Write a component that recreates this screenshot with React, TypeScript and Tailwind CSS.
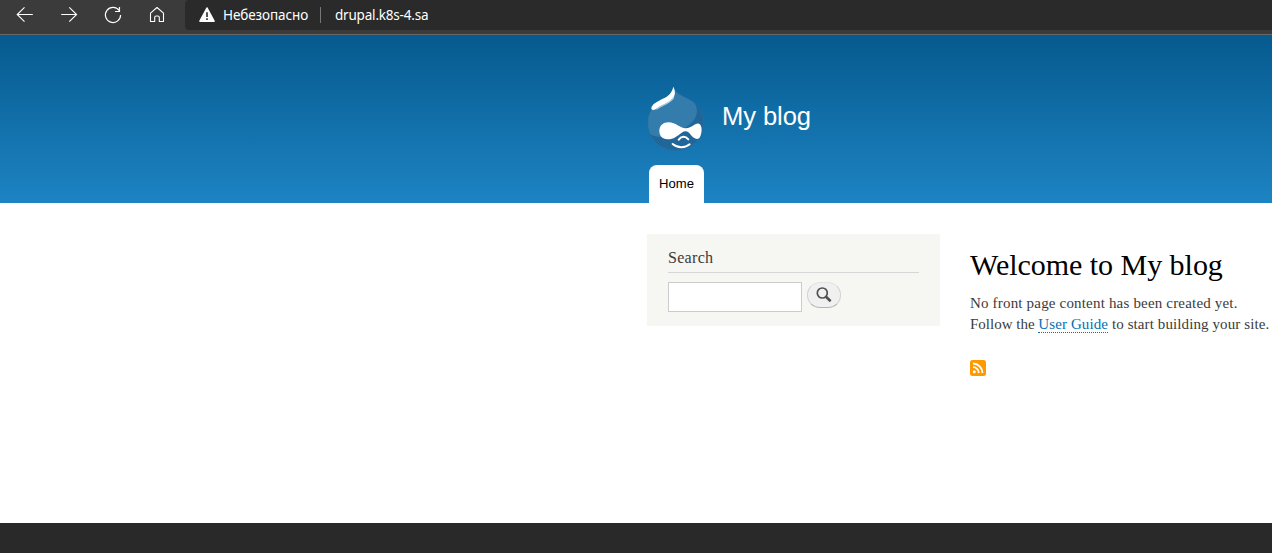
import React from "react";

function BrowserBar() {
  return (
    <div className="flex h-[35px] border-b border-[#686868] bg-[#3b3b3b] font-['Noto_Sans',sans-serif] text-white">
      <div className="flex h-[30px] w-[185px] shrink-0 items-center gap-6 pl-[15px]">
        <svg width="20" height="20" viewBox="0 0 20 20" fill="none" stroke="currentColor" strokeWidth="1.1" className="shrink-0">
          <path d="M17.8 9.5H2.2M9.5 2.4L2.2 9.5L9.5 16.6" />
        </svg>
        <svg width="20" height="20" viewBox="0 0 20 20" fill="none" stroke="currentColor" strokeWidth="1.1" className="shrink-0">
          <path d="M2.2 9.5H17.6M10.3 2.4L17.6 9.5L10.3 16.6" />
        </svg>
        <svg width="20" height="20" viewBox="0 0 20 20" fill="none" stroke="currentColor" strokeWidth="1.15" className="shrink-0">
          <path d="M16.3 5.7A7.6 7.6 0 1 0 17.6 10M16.5 2V6.5H12" />
        </svg>
        <svg width="20" height="20" viewBox="0 0 20 20" fill="none" stroke="currentColor" strokeWidth="1.1" strokeLinejoin="round" className="shrink-0">
          <path d="M3.5 8.2L10 2.5L16.5 8.2V16.5H12.3V12.5A1.5 1.5 0 0 0 10.8 11H9.2A1.5 1.5 0 0 0 7.7 12.5V16.5H3.5Z" />
        </svg>
      </div>
      <div className="flex h-[30px] grow items-center rounded-bl-[4px] rounded-tl-[4px] bg-[#2a2a2a] pl-[14px] text-[13.5px]">
        <svg width="16" height="16" viewBox="0 0 16 16" className="shrink-0">
          <path d="M8 1L15 14.2H1Z" fill="white" stroke="white" strokeWidth="1.6" strokeLinejoin="round" />
          <path d="M8 5.2V10M8 11.2V13" stroke="#2a2a2a" strokeWidth="1.6" />
        </svg>
        <span className="ml-2 w-[97px] whitespace-nowrap tracking-[-0.1px]">Небезопасно</span>
        <span className="h-4 w-px bg-[#777]" />
        <span className="ml-[14px] whitespace-nowrap tracking-[-0.2px]">drupal.k8s-4.sa</span>
      </div>
    </div>
  );
}

function Logo() {
  return (
    <svg width="60" height="67" viewBox="18 15 180 201" className="shrink-0">
      <path d="M100 20C103 34 116 42 140 54C171 69 191 94 191 127C191 176 156 211 107 211C58 211 23 177 23 127C23 101 36 81 57 67C78 53 95 47 100 20Z" fill="#347cac" stroke="#24699b" strokeWidth="2" />
      <path d="M164 70C182 86 190 105 190 127C190 175 156 210 107 210C72 210 44 192 31 163C56 178 92 171 123 152C160 130 183 104 164 70Z" fill="#216698" />
      <path d="M100 20C106 32 107 45 99 54C88 70 68 73 56 82C45 91 34 93 34 84C36 74 48 67 61 60C82 50 95 43 100 20Z" fill="#fff" />
      <path d="M102 52C88 72 68 74 49 88" fill="none" stroke="#a9cae0" strokeWidth="4" />
      <path d="M85 127C108 127 119 144 137 145C153 146 165 128 177 131C187 134 187 158 180 171C173 184 158 173 151 163C144 153 136 151 125 158C111 168 102 178 83 178C66 178 57 166 58 151C59 136 70 127 85 127Z" fill="#fff" />
      <path d="M116 179C123 168 136 167 145 178" fill="none" stroke="#fff" strokeWidth="6" strokeLinecap="round" />
      <path d="M98 192C112 204 135 205 149 193" fill="none" stroke="#fff" strokeWidth="6" strokeLinecap="round" />
    </svg>
  );
}

export default function App() {
  return (
    <div className="flex h-[553px] w-[1272px] flex-col overflow-hidden bg-white">
      <BrowserBar />
      <header className="flex h-[168px] shrink-0 flex-col justify-between bg-linear-to-b from-[#055a8e] to-[#1d84c3] pl-[646px] pt-[50px] font-['Liberation_Sans',sans-serif]">
        <div className="flex">
          <Logo />
          <h1 className="ml-4 mt-[12px] text-[25.6px] leading-[38px] tracking-[-0.1px] text-white">My blog</h1>
        </div>
        <nav className="ml-[3px] flex h-[38px] w-[55px] justify-center rounded-t-[8px] bg-white">
          <a className="text-[13.1px] leading-[37px] text-black">Home</a>
        </nav>
      </header>
      <main className="flex grow items-start pl-[647px] pt-[30px] font-['Liberation_Serif',serif] text-[#3b3b3b]">
        <aside className="mt-px flex h-[92px] w-[293px] shrink-0 flex-col bg-[#f6f6f2] px-[21px] pt-[13px]">
          <h2 className="h-[26px] border-b border-[#d6d6d6] text-[16px] leading-[22px] tracking-[0.3px]">Search</h2>
          <form className="mt-[9px] flex gap-[5px]">
            <input className="h-[30px] w-[134px] border border-[#ccc] bg-white outline-none" />
            <button type="button" className="flex h-[26px] w-[34px] items-center justify-center rounded-full border border-[#e4e4e4] border-b-[#b4b4b4] border-x-[#d2d2d2] bg-[#f0f0f0]">
              <svg width="16" height="16" viewBox="0 0 16 16" fill="none" stroke="#505050">
                <circle cx="6.3" cy="6" r="5" strokeWidth="1.7" />
                <path d="M9.8 9.5L14.6 14.2" strokeWidth="2.6" />
              </svg>
            </button>
          </form>
        </aside>
        <section className="ml-[30px] whitespace-nowrap">
          <h1 className="mt-[12px] text-[30px] leading-[40px] tracking-[-0.03px] text-black">Welcome to My blog</h1>
          <div className="mt-[8px] text-[15px] leading-[21px]">
            <p className="tracking-[0.18px]">No front page content has been created yet.</p>
            <p className="tracking-[0.1px]">
              <span className="tracking-[0px]">Follow the </span><a className="border-b border-dotted border-[#0071b3] text-[#0071b3]">User Guide</a> to start building your site.
            </p>
          </div>
          <svg width="16" height="16" viewBox="0 0 16 16" className="mt-[25px]">
            <rect width="16" height="16" rx="2.5" fill="#ff9900" />
            <circle cx="4.3" cy="11.8" r="1.5" fill="#fff" />
            <path d="M3 7.2A5.8 5.8 0 0 1 8.8 13M3 3.5A9.5 9.5 0 0 1 12.5 13" fill="none" stroke="#fff" strokeWidth="1.8" />
          </svg>
        </section>
      </main>
      <footer className="h-[30px] shrink-0 bg-[#292929]" />
    </div>
  );
}
